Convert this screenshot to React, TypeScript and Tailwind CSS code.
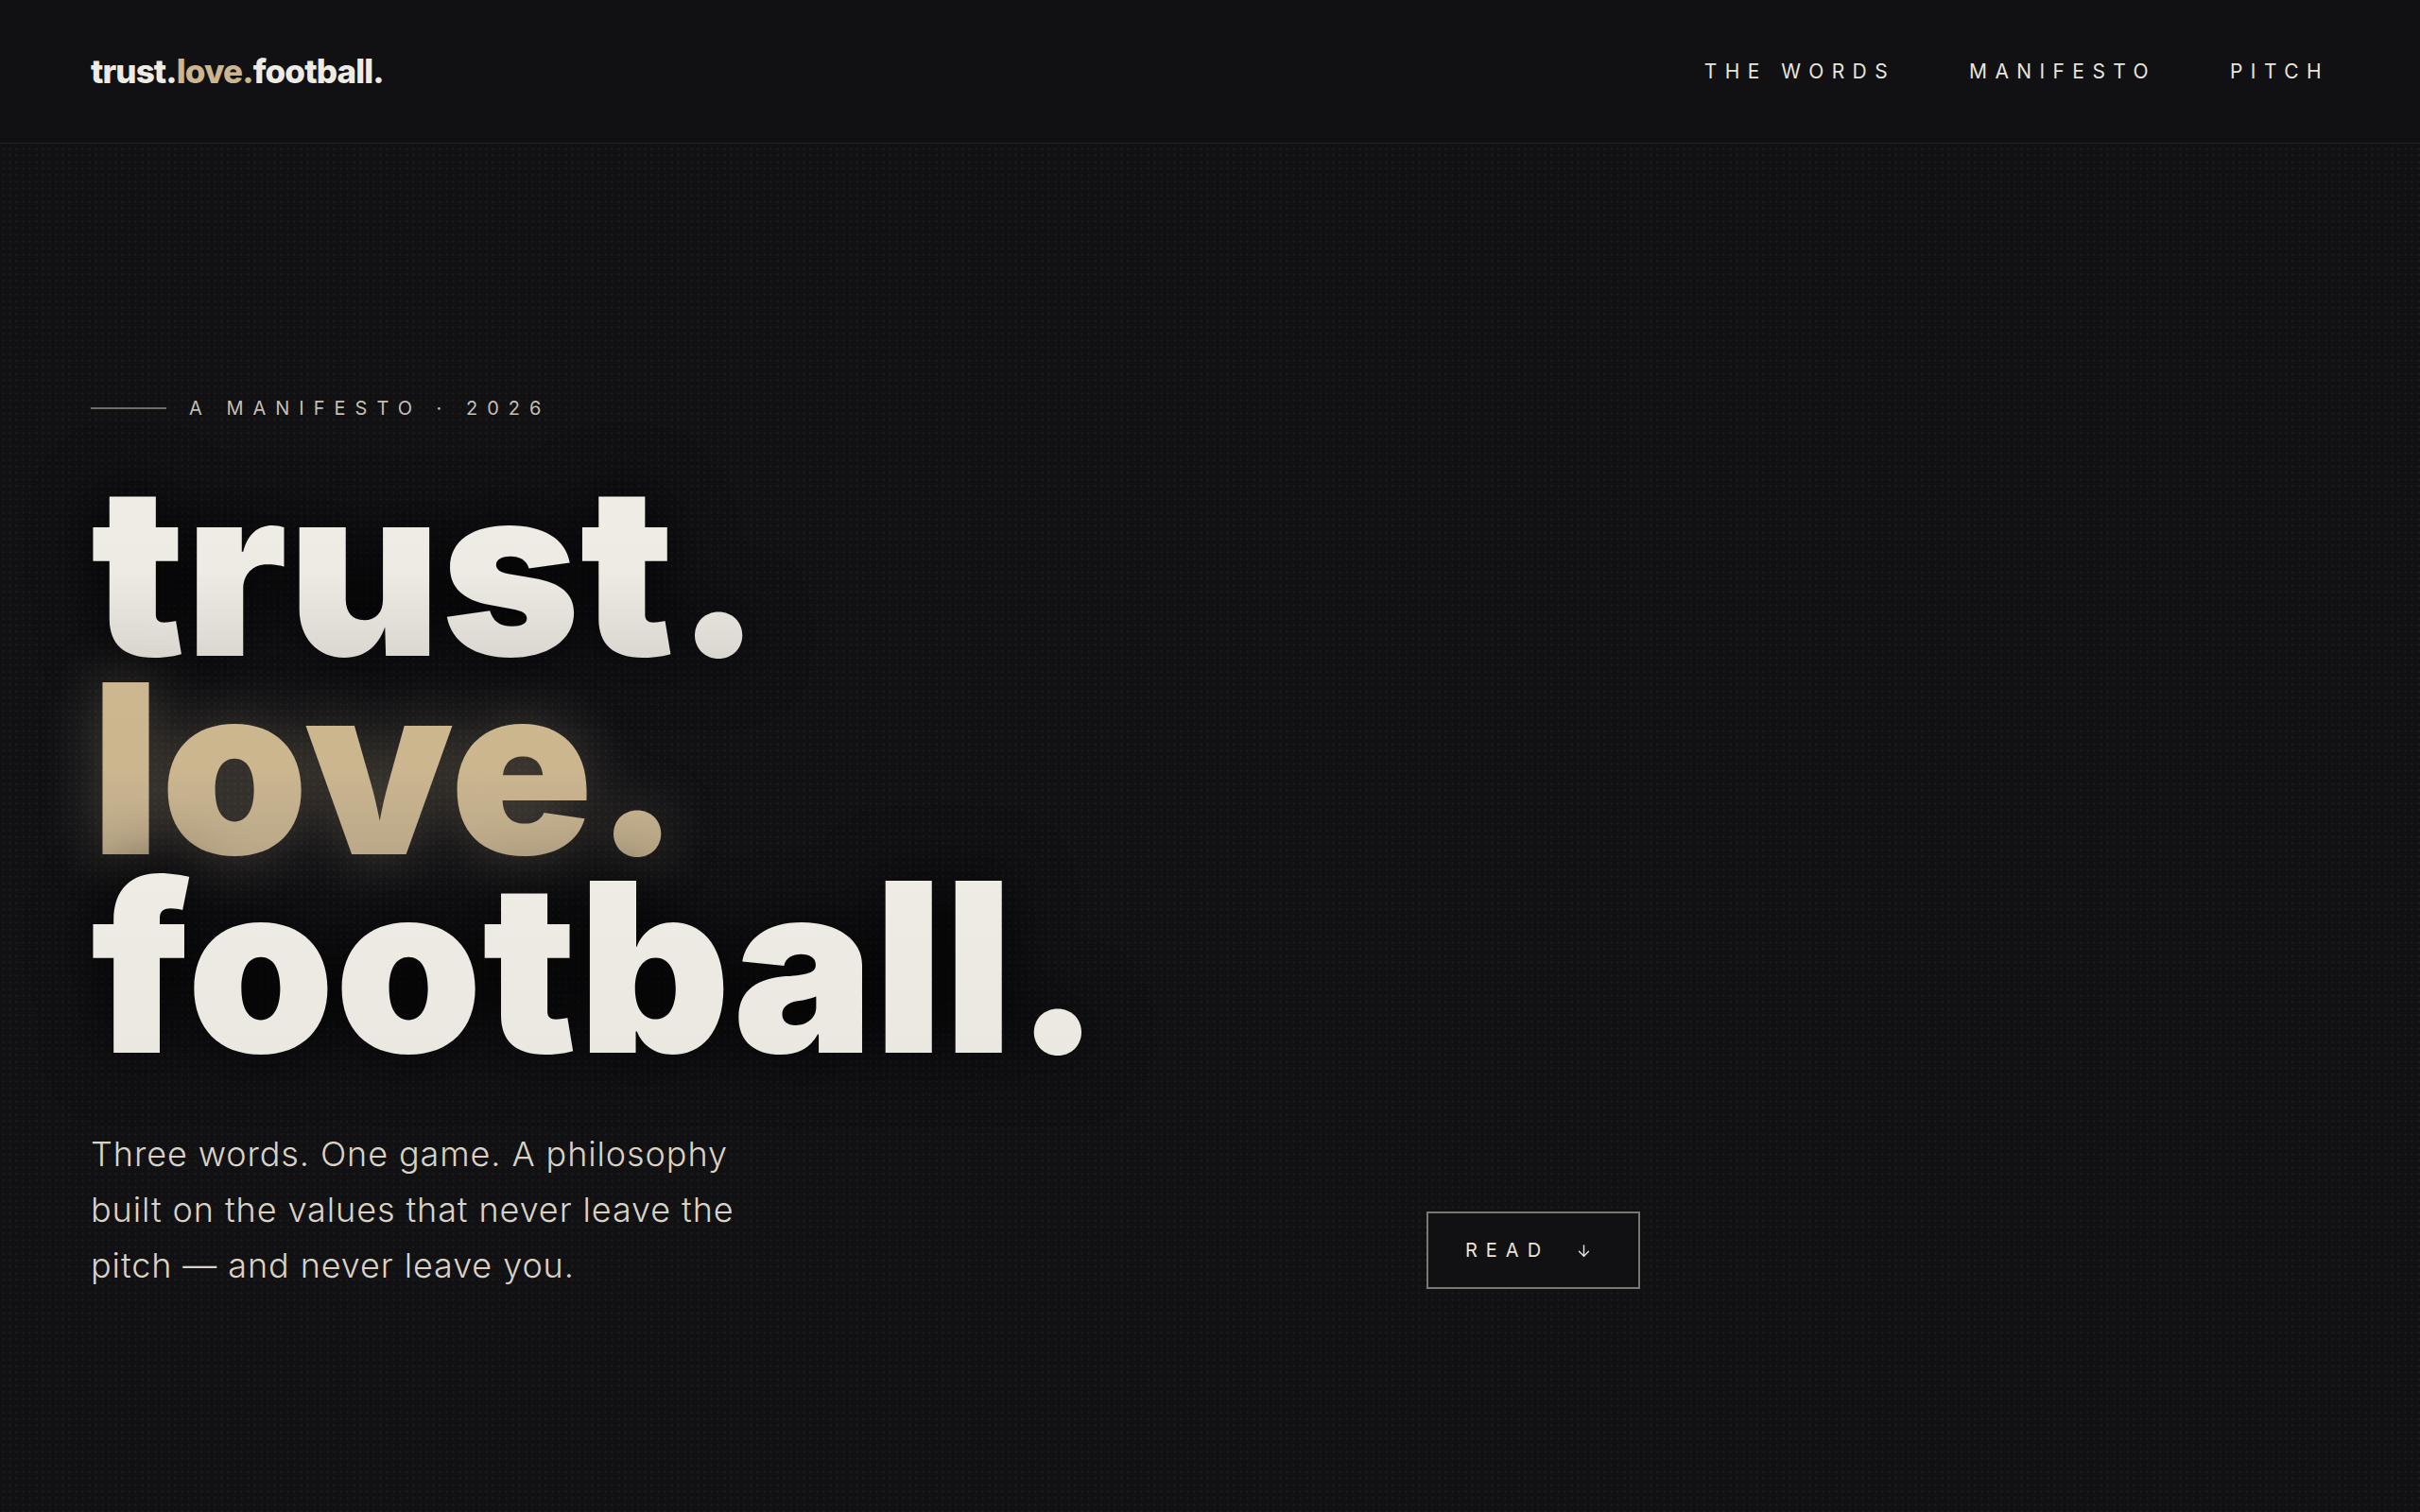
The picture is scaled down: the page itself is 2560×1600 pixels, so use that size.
import React from "react";

const sans = "font-['Inter','Liberation_Sans',sans-serif]";

export default function App() {
  return (
    <div className={`min-h-screen w-full bg-[#111114] text-[#eeebe4] ${sans}`}>
      <div className="min-h-screen w-full bg-[radial-gradient(rgba(255,255,255,0.04)_1px,transparent_1.2px)] bg-[size:7px_7px]">
        <header className="flex h-[152px] items-center justify-between border-b border-[#27231f] bg-[#111114] px-24">
          <div className="text-[35px] font-extrabold tracking-[-0.025em] leading-none">
            <span className="text-[#eeebe4]">trust.</span>
            <span className="text-[#cbb68f]">love.</span>
            <span className="text-[#eeebe4]">football.</span>
          </div>
          <nav className="flex items-center gap-[78px] text-[21px] font-normal tracking-[0.4em] text-[#e8e4dc]">
            <span>THE WORDS</span>
            <span>MANIFESTO</span>
            <span>PITCH</span>
          </nav>
        </header>

        <main className="px-24 pt-[266px]">
          <div className="flex items-center gap-6">
            <div className="h-[2px] w-[80px] bg-[#6f6b66]" />
            <span className="text-[20px] leading-7 tracking-[0.5em] text-[#c4beb4]">A MANIFESTO · 2026</span>
          </div>

          <h1 className="mt-[52px] text-[250px] font-black leading-[210px] tracking-normal">
            <span className="block w-fit bg-gradient-to-b from-[#f0ede7] via-[#eeebe4] to-[#d8d4ce] bg-clip-text text-transparent drop-shadow-[0_0_34px_rgba(0,0,0,0.95)]">
              trust.
            </span>
            <span className="block w-fit bg-gradient-to-b from-[#cdb78f] via-[#cbb68f] to-[#b8a688] bg-clip-text text-transparent drop-shadow-[0_0_30px_rgba(203,182,143,0.3)]">
              love.
            </span>
            <span className="block w-fit bg-gradient-to-b from-[#efece6] to-[#ebe8e1] bg-clip-text text-transparent drop-shadow-[0_0_34px_rgba(0,0,0,0.95)]">
              football.
            </span>
          </h1>

          <div className="mt-16 flex items-end">
            <p className="w-[1413px] text-[36px] font-light leading-[59px] tracking-[0.025em] text-[#d9d2c5]">
              Three words. One game. A philosophy
              <br />
              built on the values that never leave the
              <br />
              pitch — and never leave you.
            </p>
            <button className="mb-[5px] flex h-[82px] w-[226px] items-center justify-center gap-7 border-2 border-[#7a7671] bg-[#111114] pr-[10px] text-[20px] tracking-[0.45em] text-[#e8e4dc]">
              <span>READ</span>
              <svg width="17" height="17" viewBox="0 0 24 24" fill="none" stroke="currentColor" strokeWidth="2" strokeLinecap="round" strokeLinejoin="round">
                <path d="M12 4v16" />
                <path d="M5 13l7 7 7-7" />
              </svg>
            </button>
          </div>
        </main>
      </div>
    </div>
  );
}
